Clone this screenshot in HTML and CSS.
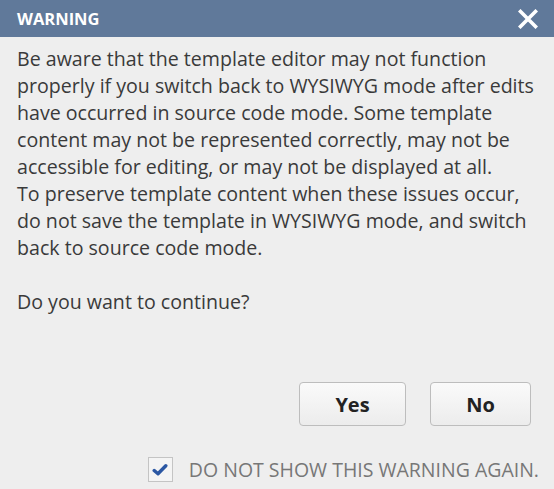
FILE: index.html
```html
<!DOCTYPE html>
<html lang="en">
<head>
  <meta charset="UTF-8" />
  <title>Warning</title>
  <link rel="stylesheet" href="styles.css">
</head>
<body>
  <div class="dialog">
    <div class="dialog-header">
      <span class="dialog-title">WARNING</span>
      <span class="close">
        <svg width="20" height="20" viewBox="0 0 20 20"><path d="M2.5 2.5 L17.5 17.5 M17.5 2.5 L2.5 17.5" stroke="#fff" stroke-width="3.6" stroke-linecap="square"/></svg>
      </span>
    </div>
    <div class="dialog-body">
      <p>Be aware that the template editor may not function properly if you switch back to WYSIWYG mode after edits have occurred in source code mode. Some template content may not be represented correctly, may not be accessible for editing, or may not be displayed at all.<br>To preserve template content when these issues occur, do not save the template in WYSIWYG mode, and switch back to source code mode.</p>
      <p class="question">Do you want to continue?</p>
    </div>
    <div class="dialog-buttons">
      <button class="btn btn-yes">Yes</button>
      <button class="btn btn-no">No</button>
    </div>
    <label class="dont-show">
      <span class="checkbox">
        <svg width="16" height="14" viewBox="0 0 16 14"><path d="M2.2 7.5 L6 10.8 L13.8 2.8" fill="none" stroke="#2b57a3" stroke-width="3.4" stroke-linecap="round" stroke-linejoin="round"/></svg>
      </span>
      DO NOT SHOW THIS WARNING AGAIN.
    </label>
  </div>
</body>
</html>
```

FILE: styles.css
```css
* {
  box-sizing: border-box;
  margin: 0;
  padding: 0;
}
body {
  background: #eeeeee;
  font-family: 'Open Sans', sans-serif;
  color: #3a3a3a;
}
.dialog {
  width: 554px;
  height: 489px;
  display: flex;
  flex-direction: column;
}
.dialog-header {
  height: 37px;
  background: #60799a;
  display: flex;
  align-items: center;
  justify-content: space-between;
  padding: 0 16px 0 17px;
}
.dialog-title {
  color: #fff;
  font-weight: 700;
  font-size: 16.5px;
}
.close {
  display: flex;
}
.dialog-body {
  padding: 8px 17px 0 17px;
  font-size: 19.6px;
  line-height: 27px;
}
.question {
  margin-top: 27px;
}
.dialog-buttons {
  display: flex;
  justify-content: flex-end;
  gap: 24px;
  padding: 0 23px 0 0;
  margin-top: 67px;
}
.btn {
  height: 44px;
  border: 1px solid #bdbdbd;
  border-radius: 4px;
  background: linear-gradient(#fafafa, #ececec);
  font-family: 'Open Sans', sans-serif;
  font-weight: 700;
  font-size: 20px;
  color: #222;
}
.btn-yes {
  width: 107px;
}
.btn-no {
  width: 101px;
}
.dont-show {
  display: flex;
  align-items: center;
  justify-content: flex-end;
  gap: 16px;
  padding-right: 15px;
  margin-top: 30px;
  font-size: 19.5px;
  color: #777;
}
.checkbox {
  width: 25px;
  height: 25px;
  border: 1px solid #c4c4c4;
  background: #f4f4f4;
  display: flex;
  align-items: center;
  justify-content: center;
}
```
